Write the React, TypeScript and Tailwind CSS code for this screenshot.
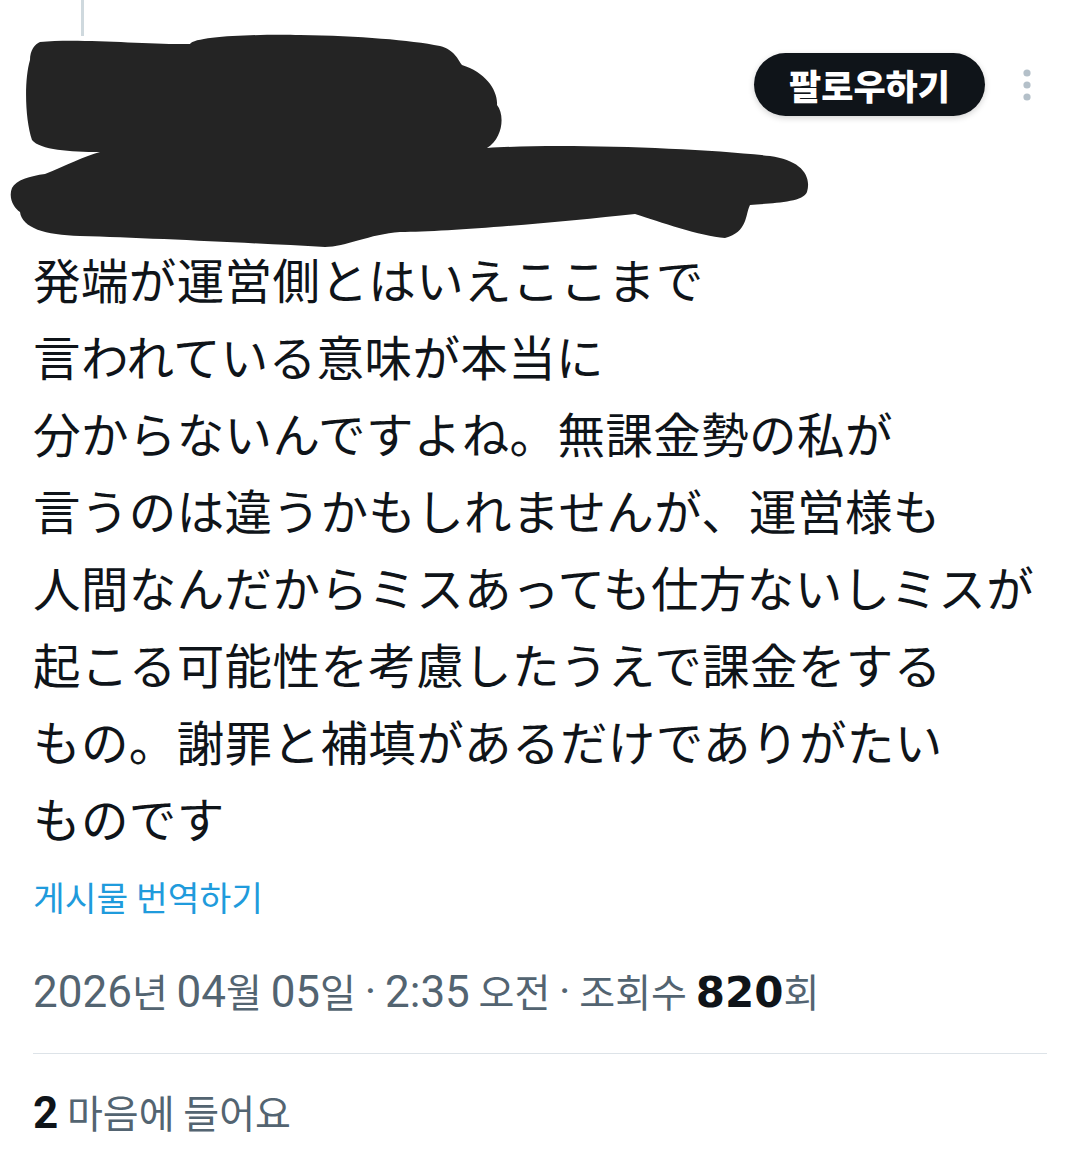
export default function App() {
  const lines = [
    '発端が運営側とはいえここまで',
    '言われている意味が本当に',
    '分からないんですよね。無課金勢の私が',
    '言うのは違うかもしれませんが、運営様も',
    '人間なんだからミスあっても仕方ないしミスが',
    '起こる可能性を考慮したうえで課金をする',
    'もの。謝罪と補填があるだけでありがたい',
    'ものです',
  ]

  const num = "font-['Roboto'] text-[44px]"

  return (
    <div className="w-[1080px] h-[1168px] bg-white overflow-hidden font-['Noto_Sans_CJK_KR',sans-serif] text-[#0f1419]">
      {/* header: redacted author + follow */}
      <div className="flex items-start h-[240px]">
        <div className="flex flex-col w-[740px] shrink-0">
          <div className="ml-[81px] w-[3px] h-[36px] bg-[#cfd9de]" />
          <svg viewBox="0 36 812 214" width="812" height="214" className="overflow-visible">
            <path
              fill="#242424"
              d="M 40 42 C 80 38, 150 45, 190 44 C 195 36, 260 34, 300 35 C 360 36, 410 40, 440 46 C 455 50, 458 60, 462 65 C 485 72, 498 90, 497 105 C 505 115, 503 138, 487 148 C 560 143, 700 148, 770 156 C 800 160, 812 175, 807 192 C 803 203, 770 203, 750 205 C 745 215, 748 232, 725 238 C 700 236, 660 222, 635 214 C 560 222, 450 232, 400 232 C 370 234, 345 247, 325 247 C 250 243, 150 238, 80 236 C 45 235, 22 228, 20 212 C 14 208, 8 198, 12 188 C 16 180, 30 176, 45 174 C 65 166, 85 156, 100 152 C 70 152, 40 150, 32 140 C 25 120, 24 80, 30 60 C 30 50, 35 44, 40 42 Z"
            />
          </svg>
        </div>
        <div className="flex items-center ml-auto mr-[11px] mt-[53px]">
          <button className="w-[231px] h-[63px] rounded-full bg-[#0f1419] text-white text-[35px] font-extrabold leading-none shadow-[0_2px_6px_rgba(0,0,0,0.18)] font-['Noto_Sans_CJK_KR',sans-serif]">
            팔로우하기
          </button>
          <div className="w-[84px] flex justify-center">
            <svg width="10" height="34" viewBox="0 0 10 34">
              <circle cx="5" cy="5" r="3.6" fill="#b4c0c9" />
              <circle cx="5" cy="17" r="3.6" fill="#b4c0c9" />
              <circle cx="5" cy="29" r="3.6" fill="#b4c0c9" />
            </svg>
          </div>
        </div>
      </div>

      <div className="px-[33px]">
        {/* post body */}
        <div className="text-[47.5px] leading-[77px] tracking-[0.4px] font-['Noto_Sans_CJK_JP',sans-serif] whitespace-nowrap">
          {lines.map((l) => (
            <div key={l}>{l}</div>
          ))}
        </div>

        <div className="mt-[16px] text-[34.5px] leading-[48px] text-[#1f9bdc]">게시물 번역하기</div>

        <div className="mt-[42px] h-[56px] leading-[56px] text-[39px] text-[#536471] whitespace-nowrap">
          <span className={num}>2026</span>년 <span className={num}>04</span>월 <span className={num}>05</span>일{' '}
          <span className={num}>·</span> <span className={num}>2:35</span> 오전 <span className={num}>·</span> 조회수{' '}
          <span className="font-['DejaVu_Sans'] text-[42px] font-bold text-[#0f1419]">820</span>회
        </div>

        <div className="mt-[35px] h-px w-[1014px] bg-[#dde3e8]" />

        <div className="mt-[29px] h-[56px] leading-[56px] text-[39px] text-[#536471] whitespace-nowrap">
          <span className={`${num} font-bold text-[#0f1419]`}>2</span> 마음에 들어요
        </div>
      </div>
    </div>
  )
}
